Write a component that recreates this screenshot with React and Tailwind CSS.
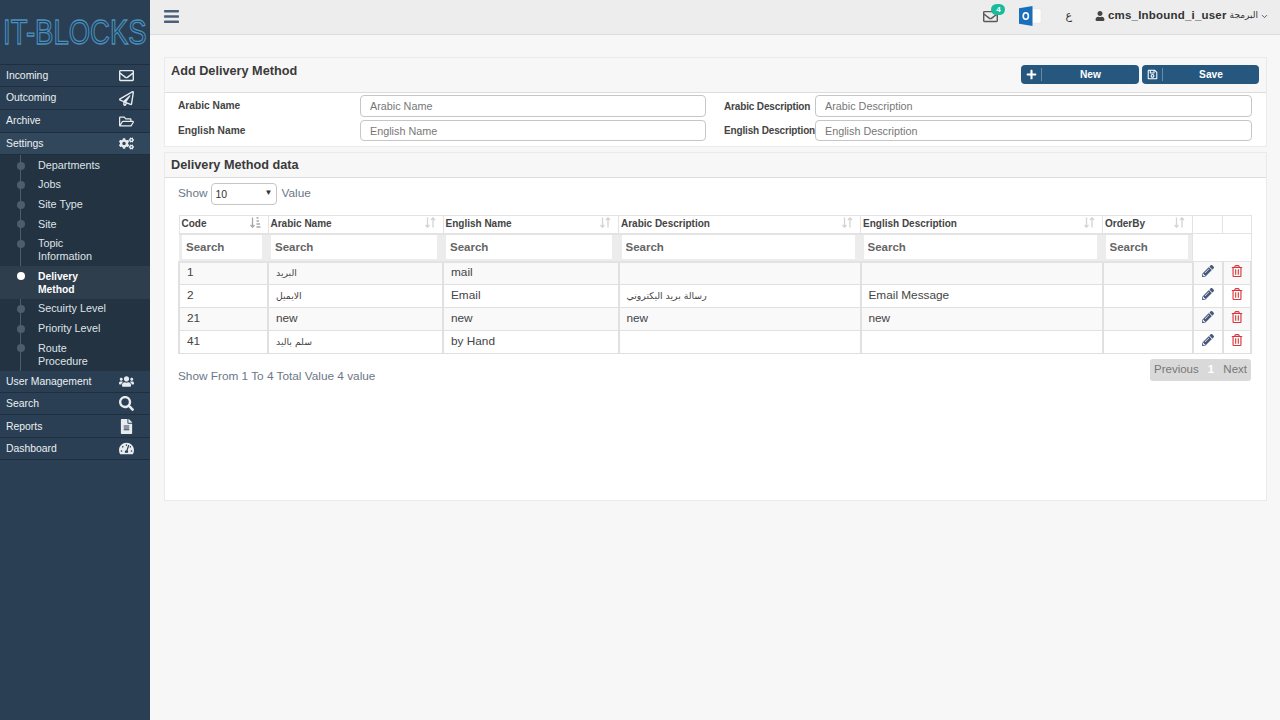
import React from 'react'
import {
  FaRegEnvelope, FaRegPaperPlane, FaRegFolderOpen, FaCogs, FaUsers, FaSearch, FaFileAlt,
  FaTachometerAlt, FaBars, FaUser, FaPlus, FaRegSave, FaPencilAlt, FaRegTrashAlt,
} from 'react-icons/fa'
import { FiChevronDown } from 'react-icons/fi'

const arabic = { fontFamily: '"DejaVu Sans", sans-serif' }

const topItems = [
  { label: 'Incoming', Icon: FaRegEnvelope, h: 'h-[22px]' },
  { label: 'Outcoming', Icon: FaRegPaperPlane, h: 'h-[23px]' },
  { label: 'Archive', Icon: FaRegFolderOpen, h: 'h-[23px]' },
]
const bottomItems = [
  { label: 'User Management', Icon: FaUsers, h: 'h-[22px]' },
  { label: 'Search', Icon: FaSearch, h: 'h-[22px]' },
  { label: 'Reports', Icon: FaFileAlt, h: 'h-[23px]' },
  { label: 'Dashboard', Icon: FaTachometerAlt, h: 'h-[22px]' },
]
const subItems = [
  ['Departments'], ['Jobs'], ['Site Type'], ['Site'], ['Topic', 'Information'],
  ['Delivery', 'Method'], ['Secuirty Level'], ['Priority Level'], ['Route', 'Procedure'],
]

const columns = [
  { name: 'Code', w: 'w-[89px]', input: 'w-[80px]' },
  { name: 'Arabic Name', w: 'w-[175px]', input: 'w-[166px]' },
  { name: 'English Name', w: 'w-[175.5px]', input: 'w-[166px]' },
  { name: 'Arabic Description', w: 'w-[242px]', input: 'w-[233px]' },
  { name: 'English Description', w: 'w-[242px]', input: 'w-[233px]' },
  { name: 'OrderBy', w: 'w-[90px]', input: 'w-[82px]' },
]

const rows = [
  { code: '1', ar: 'البريد', en: 'mail', arDesc: '', enDesc: '' },
  { code: '2', ar: 'الايميل', en: 'Email', arDesc: 'رسالة بريد اليكتروني', enDesc: 'Email Message' },
  { code: '21', ar: 'new', en: 'new', arDesc: 'new', enDesc: 'new' },
  { code: '41', ar: 'سلم باليد', en: 'by Hand', arDesc: '', enDesc: '' },
]

const isLatin = t => /^[\x00-\x7f]*$/.test(t)

function SideRow({ label, Icon, h, active }) {
  return (
    <div className={`${h} flex items-center justify-between pl-[6px] pr-[16px] border-b border-[#1f2f3e] text-[10.4px] text-[#ecf0f1] ${active ? 'bg-[#31475c]' : ''}`}>
      <span>{label}</span>
      <Icon className="text-[15px] text-[#e7ebee]" />
    </div>
  )
}

function Sidebar() {
  return (
    <aside className="w-[150px] shrink-0 bg-[#2a3f54]">
      <div className="h-[64px] pt-[11px] pl-[3px] overflow-hidden">
        <div className="text-[27.5px] leading-[42px] origin-left scale-y-[1.28] whitespace-nowrap text-[#20405c] [-webkit-text-stroke:1px_#4d8fba]">IT-BLOCKS</div>
      </div>
      <div className="border-t border-[#1f2f3e]">
        {topItems.map(item => <SideRow key={item.label} {...item} />)}
        <SideRow label="Settings" Icon={FaCogs} h="h-[22px]" active />
      </div>
      <div className="relative bg-[#233342] py-[0.5px]">
        <span className="absolute left-[20px] top-0 bottom-0 w-px bg-[#4d5d6c]" />
        {subItems.map(lines => {
          const active = lines[0] === 'Delivery'
          return (
            <div key={lines[0]} className={`relative pl-[38px] py-[3.3px] leading-[13px] ${active ? 'bg-[#2e3e4d] text-white font-bold text-[10.3px]' : 'text-[#dfe4e8] text-[10.8px]'}`}>
              <span className={`absolute left-[17px] top-[6px] w-[8px] h-[8px] rounded-full ${active ? 'bg-white' : 'bg-[#4d5d6c]'}`} />
              {lines.map(l => <div key={l}>{l}</div>)}
            </div>
          )
        })}
      </div>
      {bottomItems.map(item => <SideRow key={item.label} {...item} />)}
    </aside>
  )
}

function OutlookIcon() {
  return (
    <svg width="24" height="20" viewBox="0 0 24 20">
      <rect x="13" y="3" width="9" height="14" fill="#fff" stroke="#e4e4e4" strokeWidth="0.6" />
      <path d="M0 2.2 13.5 0v20L0 17.8z" fill="#1a6fbc" />
      <ellipse cx="6.8" cy="10" rx="2.6" ry="3.3" fill="none" stroke="#fff" strokeWidth="1.6" />
    </svg>
  )
}

function Topbar() {
  return (
    <header className="h-[35px] shrink-0 bg-[#ededed] border-b border-[#d9dee4] flex items-center pl-[13px] pr-[11px] pb-[2px]">
      <FaBars className="text-[17px] text-[#4a6078]" />
      <div className="ml-auto flex items-center text-[#333]">
        <div className="relative">
          <FaRegEnvelope className="text-[15px] text-[#5a5a5a]" />
          <span className="absolute -top-[5px] left-[8px] w-[14px] h-[11px] rounded-full bg-[#1abb9c] text-white text-[8px] font-bold leading-[11px] text-center">4</span>
        </div>
        <div className="ml-[21px]"><OutlookIcon /></div>
        <span className="ml-[22px] text-[11px]" style={arabic}>ع</span>
        <FaUser className="ml-[23px] text-[10px] text-[#444]" />
        <span className="ml-[3px] text-[11.5px] font-bold tracking-[0.2px]">cms_Inbound_i_user</span>
        <span className="ml-[3px] text-[9px]" style={arabic}>البرمجة</span>
        <FiChevronDown className="ml-[2px] text-[9px]" />
      </div>
    </header>
  )
}

function ActionButton({ Icon, label, w }) {
  return (
    <button className={`${w} h-[19px] rounded-[4px] bg-[#26587f] text-white text-[10.2px] font-bold flex items-center`}>
      <span className="w-[21px] h-[13px] flex items-center justify-center border-r border-[#6a8ba5]">
        <Icon className="text-[11px]" />
      </span>
      <span className="flex-1 text-center px-[20px]">{label}</span>
    </button>
  )
}

function FormField({ label, labelClass, inputClass }) {
  return (
    <div className="flex items-center">
      <label className={`${labelClass} font-bold text-[#444] whitespace-nowrap`}>{label}</label>
      <input
        readOnly
        placeholder={label}
        className={`${inputClass} rounded-[4px] border border-[#c6c6c6] bg-white px-[9px] text-[10.8px] placeholder:text-[#777] outline-none`}
      />
    </div>
  )
}

function SortIcon({ active }) {
  return (
    <svg width="11" height="11" viewBox="0 0 11 11" className="-mt-[4px] shrink-0" fill="none" stroke={active ? '#a8a8a8' : '#d4d4d4'} strokeWidth="1.3">
      <path d="M2.5 0.5v9.5M0.5 8l2 2.2L4.5 8" />
      {active
        ? <path d="M6.5 1h2M6.5 4h2.5M6.5 7h3.5M6.5 10h4" />
        : <path d="M8 10.5V1M6 3l2-2.2L10 3" />}
    </svg>
  )
}

function Cell({ text }) {
  return (
    <td className="border-x-2 border-y border-[#e0e0e0] pl-[7px] text-[11.8px] leading-none text-[#444]">
      {isLatin(text) ? text : <span className="text-[9.3px]" style={arabic}>{text}</span>}
    </td>
  )
}

function DataTable() {
  return (
    <table className="mt-[10px] w-[1074px] table-fixed border-collapse">
      <thead>
        <tr className="h-[18px]">
          {columns.map((c, i) => (
            <th key={c.name} className={`${c.w} border border-[#e3e3e3] pl-[2px] pr-[7px] text-left`}>
              <div className="flex items-center justify-between text-[10px] leading-none font-bold text-[#444]">
                <span>{c.name}</span>
                <SortIcon active={i === 0} />
              </div>
            </th>
          ))}
          <th className="w-[30px] border border-[#e3e3e3]" />
          <th className="border border-[#e3e3e3]" />
        </tr>
        <tr className="h-[28px]">
          {columns.map(c => (
            <td key={c.name} className="border-y-2 border-[#e3e3e3] bg-[#ececec] px-[3px] pb-[2px]">
              <input readOnly placeholder="Search" className={`${c.input} h-[24px] block bg-white px-[4px] text-[11.5px] font-bold placeholder:text-[#666] outline-none`} />
            </td>
          ))}
          <td colSpan={2} className="border border-[#e3e3e3]" />
        </tr>
      </thead>
      <tbody>
        {rows.map((r, i) => (
          <tr key={r.code} className={`h-[23px] ${i % 2 === 0 ? 'bg-[#f9f9f9]' : 'bg-white'}`}>
            <Cell text={r.code} />
            <Cell text={r.ar} />
            <Cell text={r.en} />
            <Cell text={r.arDesc} />
            <Cell text={r.enDesc} />
            <Cell text="" />
            <td className="border-x-2 border-y border-[#e0e0e0] text-center leading-none">
              <FaPencilAlt className="inline align-top text-[12px] text-[#46597a]" />
            </td>
            <td className="border-x-2 border-y border-[#e0e0e0] text-center leading-none">
              <FaRegTrashAlt className="inline align-top text-[12px] text-[#d9343a]" />
            </td>
          </tr>
        ))}
      </tbody>
    </table>
  )
}

export default function App() {
  return (
    <div className="w-[1280px] h-[720px] flex overflow-hidden bg-[#f7f7f7] [font-family:'Liberation_Sans',Arial,sans-serif]">
      <Sidebar />
      <div className="flex-1 flex flex-col min-w-0">
        <Topbar />
        <main className="pl-[14px] pr-[13px] pt-[22px]">
          <section className="h-[90px] border border-[#eaeaea] bg-white">
            <div className="h-[35px] bg-[#f7f7f7] border-b border-[#dcdcdc] flex justify-between pl-[6px] pr-[7px]">
              <h2 className="pt-[4px] text-[12.7px] font-bold text-[#3a3a3a]">Add Delivery Method</h2>
              <div className="pt-[7px] flex gap-[3px]">
                <ActionButton Icon={FaPlus} label="New" w="w-[118px]" />
                <ActionButton Icon={FaRegSave} label="Save" w="w-[117px]" />
              </div>
            </div>
            <div className="pt-[2px] pl-[13px] pr-[14px] flex flex-col gap-[3px]">
              <div className="flex">
                <FormField label="Arabic Name" labelClass="w-[182px] text-[10.2px]" inputClass="w-[346px] h-[22px]" />
                <div className="ml-[18px]"><FormField label="Arabic Description" labelClass="w-[91px] text-[10px] tracking-[-0.15px]" inputClass="w-[437px] h-[22px]" /></div>
              </div>
              <div className="flex">
                <FormField label="English Name" labelClass="w-[182px] text-[10.2px]" inputClass="w-[346px] h-[21px]" />
                <div className="ml-[18px]"><FormField label="English Description" labelClass="w-[91px] text-[10px] tracking-[-0.15px]" inputClass="w-[437px] h-[21px]" /></div>
              </div>
            </div>
          </section>

          <section className="mt-[5px] h-[349px] border border-[#eaeaea] bg-white">
            <div className="h-[25px] bg-[#f7f7f7] border-b border-[#dcdcdc] pl-[6px] pt-[5px]">
              <h2 className="text-[12.7px] leading-[15px] font-bold text-[#3a3a3a]">Delivery Method data</h2>
            </div>
            <div className="pl-[13px] pr-[15px]">
              <div className="pt-[5px] flex items-center text-[11.8px] text-[#6b7787]">
                <span>Show</span>
                <div className="ml-[3px] w-[66px] h-[22px] border border-[#c6c6c6] rounded-[4px] flex items-center justify-between pl-[4px] pr-[3px] text-[10.5px] text-[#333]">
                  <span className="pt-[2px]">10</span>
                  <span className="text-[8px] -mt-[2px]">▼</span>
                </div>
                <span className="ml-[5px]">Value</span>
              </div>
              <DataTable />
              <div className="mt-[5px] flex items-start justify-between">
                <span className="pt-[9px] text-[11.8px] text-[#6b7787]">Show From 1 To 4 Total Value 4 value</span>
                <div className="h-[22px] w-[101px] rounded-[3px] bg-[#d9d9d9] flex items-center justify-between px-[4px] text-[11.5px] text-[#777]">
                  <span>Previous</span>
                  <span className="text-white font-bold">1</span>
                  <span>Next</span>
                </div>
              </div>
            </div>
          </section>
        </main>
      </div>
    </div>
  )
}
